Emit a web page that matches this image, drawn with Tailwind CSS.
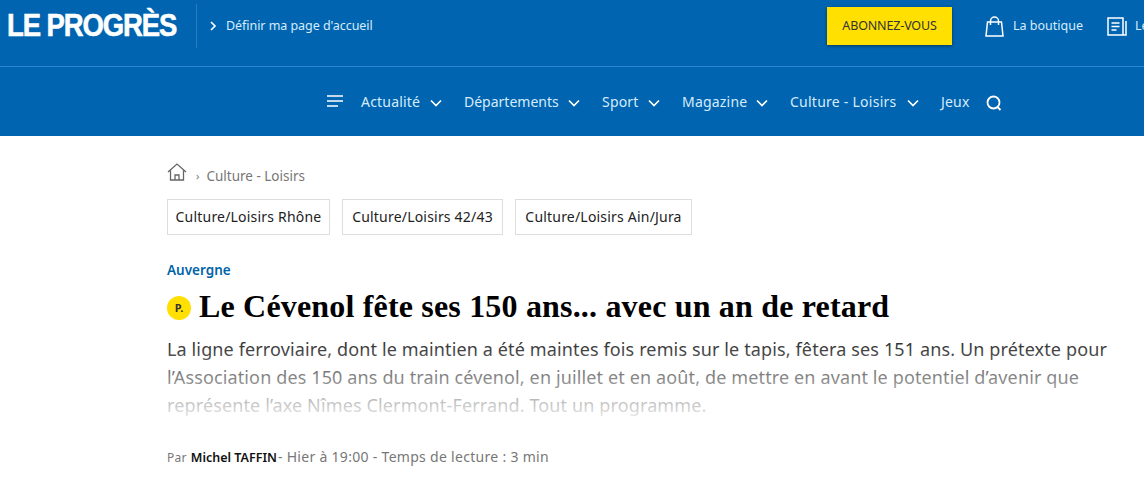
<!DOCTYPE html>
<html lang="fr">
<head>
    <meta charset="UTF-8">
    <meta name="viewport" content="width=device-width, initial-scale=1.0">
    <title>Le Progrès</title>
    <script src="https://cdn.jsdelivr.net/npm/@tailwindcss/browser@4"></script>
</head>
<body class="bg-white font-['Noto_Sans',sans-serif] overflow-hidden">

    <header class="bg-[#0064b0] text-[#d6ecfb]">
        <div class="h-[67px] border-b border-[#2a86d0] overflow-hidden">
            <div class="h-[52px] flex items-center w-[1200px]">
                <div class="pl-[7px] w-[196px] font-['Liberation_Sans',sans-serif] font-bold text-[27.5px] leading-none tracking-[-1.1px] scale-y-[1.12] [-webkit-text-stroke:0.5px_white] text-white">LE PROGRÈS</div>
                <div class="h-[44px] w-px bg-[#2a7cbd]"></div>
                <svg class="ml-[13px] w-[7px] h-[10px]" viewBox="0 0 7 10" fill="none" stroke="white" stroke-width="1.7"><path d="M1 1l4 4-4 4"/></svg>
                <a class="ml-[9px] w-[601px] text-[12.5px] tracking-[-0.05px]">Définir ma page d'accueil</a>
                <a class="w-[125px] h-[38px] flex items-center justify-center bg-[#ffe000] text-[#333] text-[12.5px] tracking-[-0.15px] shadow-[0_1px_3px_rgba(0,0,0,0.45)]">ABONNEZ-VOUS</a>
                <svg class="ml-[33px] w-[19px] h-[21px]" viewBox="0 0 19 21" fill="none" stroke="white" stroke-width="1.5"><path d="M2.500 6h14l1.500 14H1zM5.500 9V5a4 4 0 0 1 8 0v4"/></svg>
                <a class="ml-[9px] w-[94px] text-[12.5px]">La boutique</a>
                <svg class="w-[20px] h-[19px]" viewBox="0 0 20 19" fill="none" stroke="white" stroke-width="1.5"><path d="M1 1h15v17H1zM4.500 6h8M4.500 9.500h8M4.500 13h5M19 4v14h-3"/></svg>
                <a class="ml-[8px] text-[12.5px]">Le journal</a>
            </div>
        </div>
        <nav class="h-[69px] flex items-center pl-[327px] text-[14px] tracking-[0.2px] pb-[1px]">
            <svg class="w-[16px] h-[12px] mr-[18px]" viewBox="0 0 16 12" fill="none" stroke="white" stroke-width="1.7"><path d="M0 1h16M0 6h16M0 11h11"/></svg>
            <a class="w-[59px] whitespace-nowrap">Actualité</a>
            <svg class="ml-[10px] mr-[22px] mt-[3px] w-[12px] h-[8px]" viewBox="0 0 12 8" fill="none" stroke="white" stroke-width="1.7"><path d="M1 1.500l5 5 5-5"/></svg>
            <a class="w-[94px] whitespace-nowrap tracking-normal">Départements</a>
            <svg class="ml-[10px] mr-[22px] mt-[3px] w-[12px] h-[8px]" viewBox="0 0 12 8" fill="none" stroke="white" stroke-width="1.7"><path d="M1 1.500l5 5 5-5"/></svg>
            <a class="w-[36px] whitespace-nowrap">Sport</a>
            <svg class="ml-[10px] mr-[22px] mt-[3px] w-[12px] h-[8px]" viewBox="0 0 12 8" fill="none" stroke="white" stroke-width="1.7"><path d="M1 1.500l5 5 5-5"/></svg>
            <a class="w-[64px] whitespace-nowrap">Magazine</a>
            <svg class="ml-[10px] mr-[22px] mt-[3px] w-[12px] h-[8px]" viewBox="0 0 12 8" fill="none" stroke="white" stroke-width="1.7"><path d="M1 1.500l5 5 5-5"/></svg>
            <a class="w-[107px] whitespace-nowrap tracking-[0.25px]">Culture - Loisirs</a>
            <svg class="ml-[10px] mr-[22px] mt-[3px] w-[12px] h-[8px]" viewBox="0 0 12 8" fill="none" stroke="white" stroke-width="1.7"><path d="M1 1.500l5 5 5-5"/></svg>
            <a class="w-[29px] whitespace-nowrap">Jeux</a>
            <svg class="ml-[16px] mt-[3px] w-[16px] h-[16px]" viewBox="0 0 16 16" fill="none" stroke="white" stroke-width="1.8"><circle cx="7.500" cy="7.500" r="6"/><path d="M11.500 12l3 3"/></svg>
        </nav>
    </header>

    <main class="pl-[167px] pr-[30px]">
        <div class="pt-[27px] flex items-center h-[50px] text-[13.5px] text-[#777]">
            <svg class="w-[20px] h-[18px] -mt-[6px]" viewBox="0 0 20 18" fill="none" stroke="#666" stroke-width="1.300"><path d="M1 9l9-8 9 8M3.500 7.500V17h13V7.500M8 17v-5h4v5"/></svg>
            <span class="ml-[9px] text-[11px] mt-[4px]">›</span>
            <span class="ml-[7px] mt-[4px]">Culture - Loisirs</span>
        </div>
        <div class="mt-[13px] flex gap-[12px] text-[14px] tracking-[0.2px] text-[#222]">
            <a class="w-[163px] h-[36px] pb-[2px] flex items-center justify-center whitespace-nowrap border border-[#ddd]">Culture/Loisirs Rhône</a>
            <a class="w-[161px] h-[36px] pb-[2px] flex items-center justify-center whitespace-nowrap border border-[#ddd]">Culture/Loisirs 42/43</a>
            <a class="w-[177px] h-[36px] pb-[2px] flex items-center justify-center whitespace-nowrap border border-[#ddd]">Culture/Loisirs Ain/Jura</a>
        </div>
        <div class="mt-[25px] text-[13.5px] leading-[20px] font-semibold text-[#0064a8]">Auvergne</div>
        <h1 class="mt-[7px] flex items-center font-['Liberation_Serif',serif] font-bold text-[32px] tracking-[0.18px] leading-[38px] text-black">
            <span class="w-[24px] h-[24px] mr-[8px] mt-[3px] rounded-full bg-[#ffe000] flex items-center justify-center font-['Noto_Sans',sans-serif] text-[11px] tracking-normal text-[#333]">P.</span>
            Le Cévenol fête ses 150 ans... avec un an de retard
        </h1>
        <div class="relative mt-[10px] text-[18px] tracking-[0.13px] leading-[28px] text-[#333]">
            <p>La ligne ferroviaire, dont le maintien a été maintes fois remis sur le tapis, fêtera ses 151 ans. Un prétexte pour l’Association des 150 ans du train cévenol, en juillet et en août, de mettre en avant le potentiel d’avenir que représente l’axe Nîmes Clermont-Ferrand. Tout un programme.</p>
            <div class="absolute inset-0 bg-linear-to-b from-white/0 from-[10%] to-white/90"></div>
        </div>
        <div class="mt-[27px] text-[14px] tracking-[0.3px] text-[#777]">
            <span class="text-[12px]">Par</span> <span class="font-semibold text-[12.5px] tracking-normal text-[#111]">Michel TAFFIN</span> <span class="-ml-[3px]">- Hier à 19:00 - Temps de lecture : 3 min</span>
        </div>
    </main>

</body>
</html>
